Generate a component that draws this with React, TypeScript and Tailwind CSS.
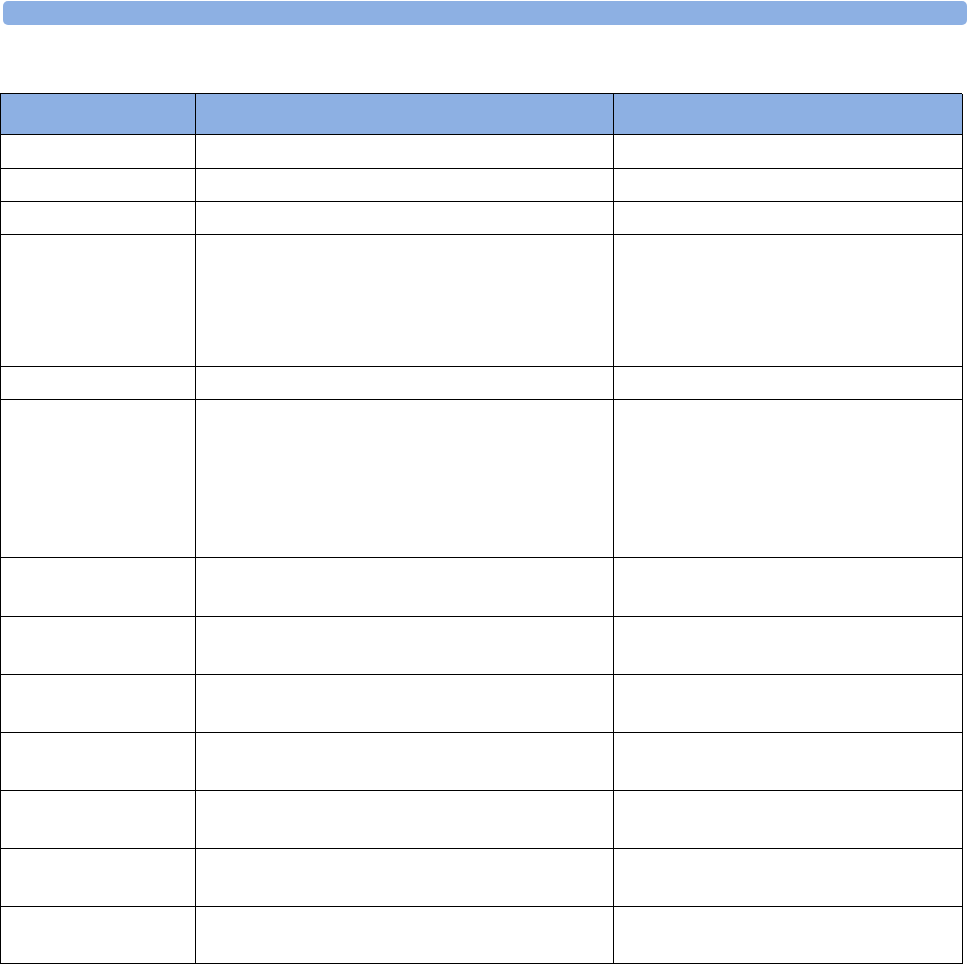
export default function App() {
  const rows = [41, 34, 33, 33, 132, 33, 158, 59, 58, 58, 58, 58, 58, 57];
  return (
    <div className="w-[968px] h-[964px] bg-white relative overflow-hidden" style={{ fontFamily: '"Liberation Sans", Arial, sans-serif' }}>
      <div className="ml-[3px] mt-[1px] w-[964px] h-[24px] rounded-[5px] bg-[#8db0e3]" />
      <div className="mt-[68px] w-[962px] border-l border-t border-black grid grid-cols-[195px_418px_349px]">
        {rows.map((h, i) => (
          [0, 1, 2].map((c) => (
            <div
              key={`${i}-${c}`}
              className={`border-r border-b border-black ${i === 0 ? "bg-[#8db0e3]" : "bg-white"}`}
              style={{ height: h }}
            />
          ))
        ))}
      </div>
    </div>
  );
}
